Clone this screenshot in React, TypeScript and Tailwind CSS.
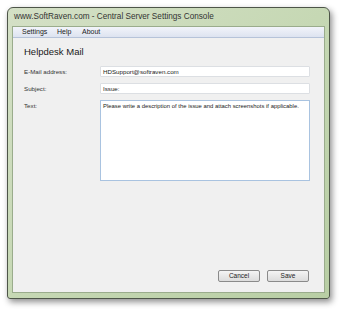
import React from "react";

const font = { fontFamily: '"Liberation Sans", Arial, sans-serif' };

function Field({ label, value }: { label: string; value: string }) {
  return (
    <div className="flex items-center h-[11px]">
      <div className="w-[76px] shrink-0 text-[6.2px] text-[#333]">{label}</div>
      <div className="flex-1 h-[11px] bg-white border border-[#dcdfe3] rounded-[1px] px-[2px] text-[6.2px] leading-[9px] text-[#222]">
        {value}
      </div>
    </div>
  );
}

export default function App() {
  return (
    <div className="w-[340px] h-[309px] bg-white pt-[7px] pl-[7px]" style={font}>
      <div className="w-[323px] h-[292px] flex flex-col rounded-t-[6px] rounded-b-[3px] border border-[#4d5548] bg-gradient-to-br from-[#d4e0c6] via-[#c6d8b4] to-[#b8cea4] shadow-[2px_3px_6px_rgba(0,0,0,0.45)] px-[4px] pb-[5px]">
        {/* title bar */}
        <div className="h-[18px] flex items-center pl-[2px] text-[8.2px] text-[#333]">
          www.SoftRaven.com - Central Server Settings Console
        </div>

        <div className="flex-1 flex flex-col border border-[#9aac8c]">
          {/* menu */}
          <div className="h-[11px] flex items-center pl-[9px] text-[7px] text-[#222] bg-gradient-to-b from-[#f2f4fa] to-[#dde3f0] border-b border-[#b6c3d9]">
            <span className="w-[35px]">Settings</span>
            <span className="w-[25px]">Help</span>
            <span>About</span>
          </div>

          {/* client */}
          <div className="flex-1 flex flex-col bg-[#f0f0f0] pl-[11px] pr-[14px]">
            <div className="mt-[8px] h-[11px] text-[9.5px] leading-[11px] text-[#1a1a1a]">Helpdesk Mail</div>

            <div className="mt-[9px] flex flex-col gap-[6px]">
              <Field label="E-Mail address:" value="HDSupport@softraven.com" />
              <Field label="Subject:" value="Issue:" />
              <div className="flex">
                <div className="w-[76px] shrink-0 text-[6.2px] leading-[9px] pt-[1px] text-[#333]">Text:</div>
                <div className="flex-1 h-[81px] bg-white border border-[#a9c3e0] px-[2px] pt-[1px] text-[5.9px] leading-[9px] text-[#222] whitespace-nowrap">
                  Please write a description of the issue and attach screenshots if applicable.
                </div>
              </div>
            </div>

            <div className="flex-1" />

            <div className="flex justify-end gap-[7px] mb-[10px] mr-[1px]">
              <button className="w-[42px] h-[12px] flex items-center justify-center text-[6.5px] text-[#222] border border-[#8a8a8a] rounded-[2px] bg-gradient-to-b from-[#f4f4f4] to-[#dcdcdc]">
                Cancel
              </button>
              <button className="w-[42px] h-[12px] flex items-center justify-center text-[6.5px] text-[#222] border border-[#8a8a8a] rounded-[2px] bg-gradient-to-b from-[#f4f4f4] to-[#dcdcdc]">
                Save
              </button>
            </div>
          </div>
        </div>
      </div>
    </div>
  );
}
